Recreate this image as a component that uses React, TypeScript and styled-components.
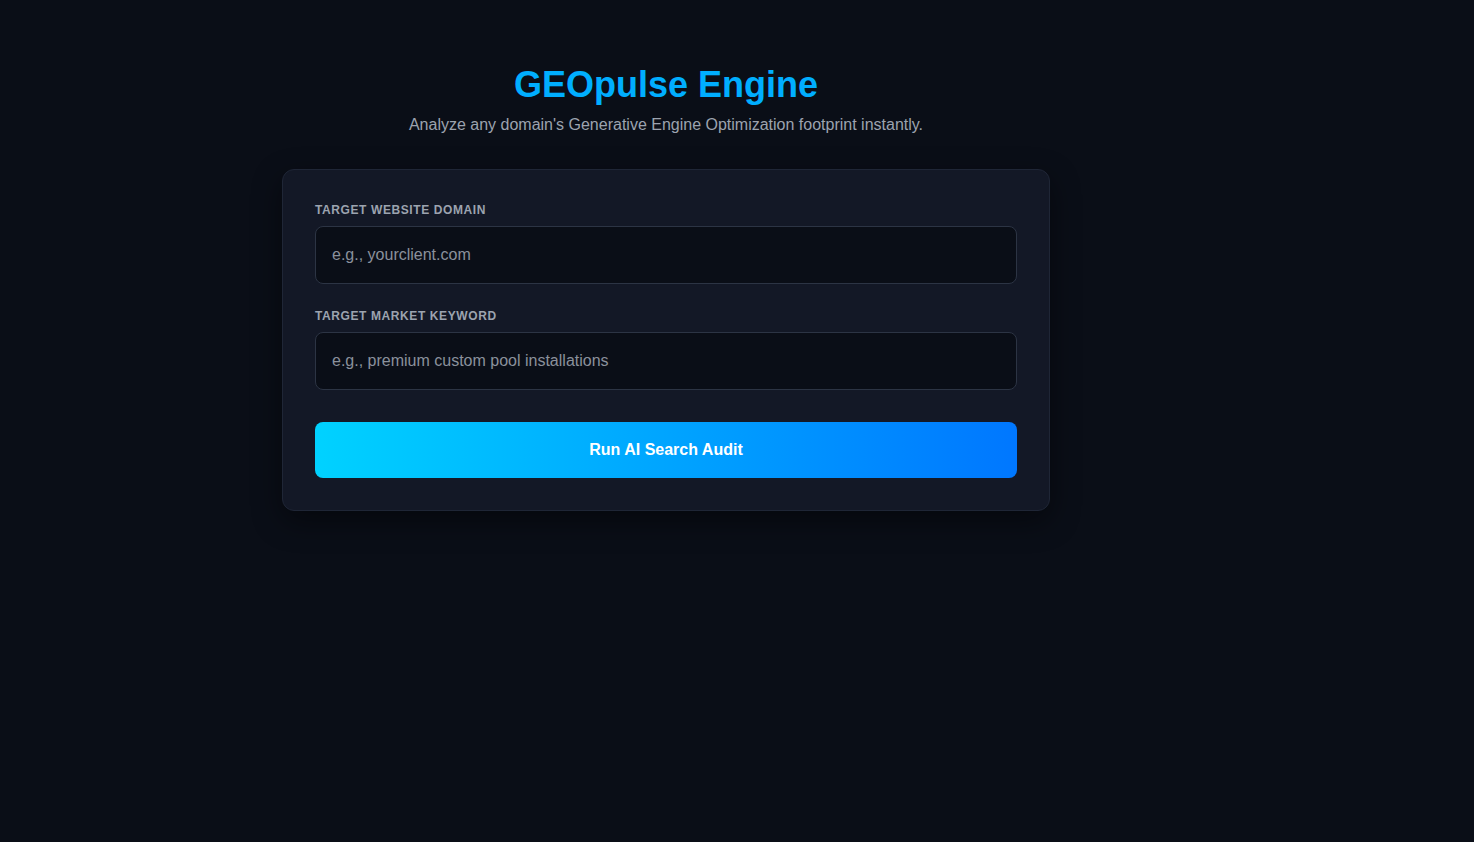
import styled, { createGlobalStyle } from "styled-components"

const GlobalStyle = createGlobalStyle`
  html, body {
    margin: 0;
    padding: 0;
    background: #0a0e17;
    font-family: "Liberation Sans", Arial, sans-serif;
    color: #e5e7eb;
  }
  * { box-sizing: border-box; }
`

const Page = styled.main`
  min-height: 842px;
  padding-top: 64px;
`

const Container = styled.div`
  width: 768px;
  margin-left: 282px;
`

const Header = styled.header`
  text-align: center;
  margin-bottom: 35px;
`

const Title = styled.h1`
  margin: 0;
  font-size: 36px;
  line-height: 41px;
  font-weight: 700;
  color: #00aeff;
`

const Subtitle = styled.p`
  margin: 10px 0 0;
  font-size: 16px;
  line-height: 19px;
  color: #9ca3af;
`

const Card = styled.form`
  background: #131826;
  border: 1px solid #1f2636;
  border-radius: 12px;
  padding: 33px 32px 32px;
  box-shadow: 0 10px 30px rgba(0, 0, 0, 0.45);
  display: flex;
  flex-direction: column;
`

const Field = styled.div<{ $last?: boolean }>`
  display: flex;
  flex-direction: column;
  margin-bottom: ${(p) => (p.$last ? "32px" : "25px")};
`

const Label = styled.label`
  font-size: 12px;
  line-height: 14px;
  font-weight: 700;
  letter-spacing: 0.6px;
  text-transform: uppercase;
  color: #9ca3af;
  margin-bottom: 9px;
`

const Input = styled.input`
  height: 58px;
  padding: 0 16px;
  background: #0a0e17;
  border: 1px solid #2c3444;
  border-radius: 8px;
  font-family: inherit;
  font-size: 16px;
  color: #e5e7eb;
  outline: none;

  &::placeholder {
    color: #8a919c;
  }
`

const SubmitButton = styled.button`
  height: 56px;
  border: none;
  border-radius: 8px;
  background: linear-gradient(90deg, #00d2ff 0%, #0077ff 100%);
  color: #ffffff;
  font-family: inherit;
  font-size: 16px;
  font-weight: 700;
  cursor: pointer;
`

export default function App() {
  return (
    <>
      <GlobalStyle />
      <Page>
        <Container>
          <Header>
            <Title>GEOpulse Engine</Title>
            <Subtitle>Analyze any domain's Generative Engine Optimization footprint instantly.</Subtitle>
          </Header>
          <Card onSubmit={(e) => e.preventDefault()}>
            <Field>
              <Label htmlFor="domain">Target Website Domain</Label>
              <Input id="domain" type="text" placeholder="e.g., yourclient.com" />
            </Field>
            <Field $last>
              <Label htmlFor="keyword">Target Market Keyword</Label>
              <Input id="keyword" type="text" placeholder="e.g., premium custom pool installations" />
            </Field>
            <SubmitButton type="submit">Run AI Search Audit</SubmitButton>
          </Card>
        </Container>
      </Page>
    </>
  )
}
